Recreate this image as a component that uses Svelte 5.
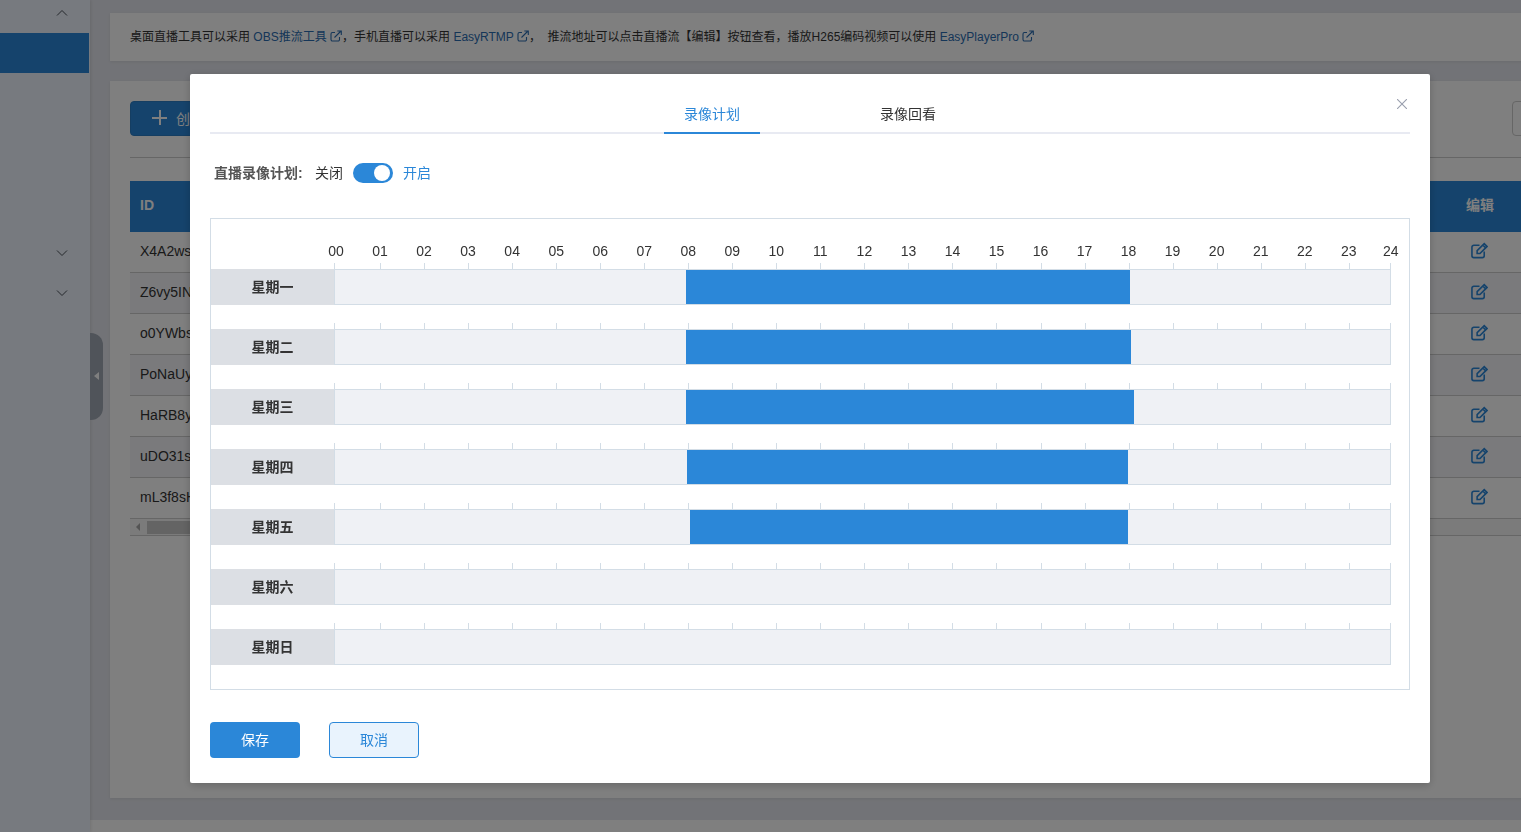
<script lang="ts">
	const hours = Array.from({ length: 25 }, (_, i) => String(i).padStart(2, '0'));
	const ids = ['X4A2wsQR', 'Z6vy5INa', 'o0YWbsTk', 'PoNaUyLe', 'HaRB8yVm', 'uDO31sGc', 'mL3f8sHp'];
	const days = [
		{ name: '星期一', from: 351, to: 795 },
		{ name: '星期二', from: 351, to: 796 },
		{ name: '星期三', from: 351, to: 799 },
		{ name: '星期四', from: 352, to: 793 },
		{ name: '星期五', from: 355, to: 793 },
		{ name: '星期六' },
		{ name: '星期日' }
	];
</script>

{#snippet ext()}
	<svg class="ext" viewBox="0 0 12 12" aria-hidden="true">
		<path d="M9.5 7v2.6a1.4 1.4 0 0 1-1.4 1.4H2.4A1.4 1.4 0 0 1 1 9.600V3.900a1.400 1.400 0 0 1 1.400-1.400H5" />
		<path d="M4.500 7.500 10.500 1.500M7.300 1h4v4" />
	</svg>
{/snippet}

<div class="page">
	<aside class="side">
		<svg class="chev up" viewBox="0 0 12 8"><path d="M1 6.500 6 1.500l5 5" /></svg>
		<div class="active"></div>
		<svg class="chev d1" viewBox="0 0 12 8"><path d="M1 1.500l5 5 5-5" /></svg>
		<svg class="chev d2" viewBox="0 0 12 8"><path d="M1 1.500l5 5 5-5" /></svg>
	</aside>
	<div class="handle"><span class="tri"></span></div>

	<main class="main">
		<div class="notice">
			桌面直播工具可以采用 <a>OBS推流工具 {@render ext()}</a>，手机直播可以采用 <a>EasyRTMP {@render ext()}</a>，&nbsp; 推流地址可以点击直播流【编辑】按钮查看，播放H265编码视频可以使用 <a>EasyPlayerPro {@render ext()}</a>
		</div>

		<section class="card">
			<div class="toolbar">
				<button class="create"><span class="plus"></span>创建直播</button>
				<button class="refresh"></button>
			</div>
			<div class="table">
				<div class="thead">
					<span class="id">ID</span>
					<span class="edit">编辑</span>
				</div>
				{#each ids as id}
					<div class="row">
						<span class="id">{id}</span>
						<span class="edit">
							<svg class="pen" viewBox="0 0 18 18" aria-hidden="true">
								<path d="M14 10v4.500a2 2 0 0 1-2 2H3a2 2 0 0 1-2-2v-9a2 2 0 0 1 2-2h6" />
								<path d="M6.500 9.200v3h3L17 4.700l-3-3zM12.500 3.200l3 3" />
							</svg>
						</span>
					</div>
				{/each}
				<div class="scrollbar">
					<span class="arrow"></span>
					<span class="thumb"></span>
				</div>
			</div>
		</section>
		<div class="footer"></div>
	</main>
</div>

<div class="overlay"></div>

<div class="modal">
	<svg class="close" viewBox="0 0 10 10"><path d="M0 0l10 10M10 0 0 10" /></svg>
	<div class="tabs">
		<span class="tab current">录像计划</span>
		<span class="tab">录像回看</span>
	</div>

	<div class="plan">
		<span class="plan-label">直播录像计划:</span>
		<span>关闭</span>
		<span class="switch"><span class="knob"></span></span>
		<span class="on">开启</span>
	</div>

	<div class="schedule">
		<div class="hours">
			{#each hours as h}
				<span>{h}</span>
			{/each}
		</div>
		{#each days as day}
			<div class="day">
				<div class="ticks">
					{#each hours as _}
						<span class="tick"></span>
					{/each}
				</div>
				<div class="line">
					<div class="name">{day.name}</div>
					<div class="track">
						{#if day.from}
							<span class="range" style="left:{day.from}px;width:{day.to - day.from}px"></span>
						{/if}
					</div>
				</div>
			</div>
		{/each}
	</div>

	<div class="actions">
		<button class="btn primary">保存</button>
		<button class="btn ghost">取消</button>
	</div>
</div>

<style>
	:global(body) {
		overflow: hidden;
		font-family: 'Liberation Sans', 'Noto Sans CJK SC', sans-serif;
		font-size: 14px;
		color: #333;
	}

	.page {
		display: flex;
		height: 832px;
		overflow: hidden;
		background: #e5e7ee;
		position: relative;
	}

	/* Sidebar */
	.side {
		flex: 0 0 90px;
		position: relative;
		background: #eef5fe;
		box-shadow: 1px 0 3px rgba(0, 0, 0, 0.1);
	}

	.active {
		position: absolute;
		top: 33px;
		left: 0;
		width: 89px;
		height: 40px;
		background: #2b87d8;
	}

	.chev {
		position: absolute;
		left: 56px;
		width: 12px;
		height: 8px;
		fill: none;
		stroke: #4a5058;
		stroke-width: 1;
	}

	.chev.up { top: 9px; }
	.chev.d1 { top: 249px; }
	.chev.d2 { top: 289px; }

	.handle {
		position: absolute;
		left: 90px;
		top: 333px;
		width: 13px;
		height: 87px;
		background: #a0a8b4;
		border-radius: 0 12px 12px 0;
		display: flex;
		align-items: center;
		justify-content: center;
	}

	.tri {
		width: 0;
		height: 0;
		border: 4px solid transparent;
		border-right: 5px solid #fff;
		border-left: 0;
		margin-top: -1px;
	}

	/* Page body behind the dialog */
	.main {
		flex: 1;
		min-width: 0;
		display: flex;
		flex-direction: column;
		padding: 13px 0 0 20px;
	}

	.notice {
		height: 48px;
		line-height: 48px;
		margin-right: -20px;
		padding-left: 20px;
		background: #fff;
		font-size: 12px;
		white-space: nowrap;
		box-shadow: 0 1px 3px rgba(0, 0, 0, 0.08);
	}

	.notice a {
		color: #2b6cb0;
	}

	.ext {
		width: 12px;
		height: 12px;
		vertical-align: -1px;
		fill: none;
		stroke: #2b6cb0;
		stroke-width: 1.1;
	}

	.card {
		margin-top: 20px;
		margin-right: -20px;
		height: 717px;
		padding: 20px;
		box-sizing: border-box;
		background: #fff;
		flex-shrink: 0;
		box-shadow: 0 1px 3px rgba(0, 0, 0, 0.08);
	}

	.toolbar {
		display: flex;
		justify-content: space-between;
		height: 56px;
		border-bottom: 1px solid #ccc;
		box-sizing: content-box;
	}

	.create {
		width: 130px;
		height: 35px;
		display: flex;
		align-items: center;
		padding: 0 0 2px 21px;
		background: #2b87d8;
		color: #fff;
		border: 1px solid #2a7cc5;
		border-radius: 4px;
		font: inherit;
	}

	.plus {
		width: 15px;
		height: 15px;
		margin-right: 9px;
		background:
			linear-gradient(#fff, #fff) center / 15px 2px no-repeat,
			linear-gradient(#fff, #fff) center / 2px 15px no-repeat;
	}

	.refresh {
		width: 60px;
		height: 35px;
		margin-right: -51px;
		background: #fff;
		border: 1px solid #ccc;
		border-radius: 4px;
	}

	.table {
		margin-top: 23px;
	}

	.thead,
	.row {
		display: flex;
		justify-content: space-between;
		align-items: center;
		padding-left: 10px;
	}

	.thead {
		height: 51px;
		box-sizing: border-box;
		padding-bottom: 4px;
		background: #2b87d8;
		color: #fff;
		font-weight: bold;
	}

	.thead .edit {
		padding-bottom: 2px;
	}

	.row {
		height: 41px;
		box-sizing: border-box;
		padding-bottom: 2px;
		border-bottom: 1px solid #ccc;
	}

	.row:nth-child(odd) {
		background: #f4f5f9;
	}

	.edit {
		flex: 0 0 82px;
		text-align: center;
		display: flex;
		justify-content: center;
		align-items: center;
	}

	.pen {
		width: 17px;
		height: 17px;
		margin: 0 2px 2px 0;
		fill: none;
		stroke: #2b87d8;
		stroke-width: 1.7;
	}

	.scrollbar {
		height: 18px;
		box-sizing: border-box;
		display: flex;
		align-items: center;
		background: #f7f7f7;
		border-bottom: 1px solid #ccc;
		margin-top: -1px;
		border-top: 1px solid #ccc;
	}

	.arrow {
		width: 0;
		height: 0;
		margin: 0 7px 0 6px;
		border: 4px solid transparent;
		border-right: 4px solid #a8a8a8;
		border-left: 0;
	}

	.thumb {
		width: 400px;
		height: 13px;
		background: #c8c8c8;
	}

	.footer {
		height: 12px;
		margin: 22px 0 0 -20px;
		background: #fff;
		flex-shrink: 0;
	}

	.overlay {
		position: fixed;
		inset: 0;
		background: rgba(0, 0, 0, 0.5);
	}

	/* Dialog */
	.modal {
		position: fixed;
		left: 190px;
		top: 74px;
		width: 1240px;
		height: 709px;
		box-sizing: border-box;
		padding: 20px 20px 0;
		background: #fff;
		border-radius: 2px;
		box-shadow: 0 2px 8px rgba(0, 0, 0, 0.2);
	}

	.close {
		position: absolute;
		right: 23px;
		top: 25px;
		width: 10px;
		height: 10px;
		fill: none;
		stroke: #9a9fae;
		stroke-width: 1.1;
	}

	.tabs {
		display: flex;
		justify-content: center;
		gap: 100px;
		height: 40px;
		box-sizing: border-box;
		border-bottom: 2px solid #e8eaf2;
	}

	.tab {
		width: 96px;
		height: 40px;
		line-height: 40px;
		box-sizing: border-box;
		text-align: center;
	}

	.tab.current {
		color: #2b87d8;
		border-bottom: 2px solid #2b87d8;
	}

	.plan {
		display: flex;
		align-items: center;
		height: 20px;
		line-height: 20px;
		margin-top: 29px;
		padding-left: 4px;
	}

	.plan span:not(.switch):not(.knob) {
		align-self: flex-start;
	}

	.plan-label {
		width: 101px;
		color: #555;
		font-weight: 600;
	}

	.switch {
		width: 40px;
		height: 20px;
		margin: 0 10px;
		position: relative;
		background: #2b87d8;
		border-radius: 10px;
	}

	.knob {
		position: absolute;
		right: 3px;
		top: 2px;
		width: 16px;
		height: 16px;
		background: #fff;
		border-radius: 50%;
	}

	.on {
		color: #2b87d8;
	}

	.schedule {
		height: 472px;
		box-sizing: border-box;
		margin-top: 35px;
		padding-top: 22px;
		border: 1px solid #d3dde6;
	}

	.hours {
		display: flex;
		height: 20px;
		line-height: 20px;
		margin: 0 0 2px 104px;
	}

	.hours span {
		flex: 0 0 44.04px;
		text-align: center;
	}

	.hours span:first-child {
		margin-left: -1px;
	}

	.hours span:last-child {
		margin-left: -2px;
	}

	.day {
		margin-bottom: 18px;
	}

	.ticks {
		display: flex;
		height: 6px;
		margin-left: 125px;
	}

	.tick {
		flex: 0 0 44.04px;
		box-sizing: border-box;
		border-left: 1px solid #d3dde6;
	}

	.tick:first-child {
		flex-basis: 46.04px;
		margin-left: -2px;
	}

	.tick:last-child {
		margin-left: -3px;
	}

	.line {
		display: flex;
		height: 36px;
	}

	.name {
		flex: 0 0 123px;
		line-height: 36px;
		text-align: center;
		font-weight: 600;
		background: #dcdfe4;
	}

	.track {
		flex: 0 0 1057px;
		position: relative;
		box-sizing: border-box;
		background: #eff1f5;
		border: 1px solid #d3dde6;
	}

	.range {
		position: absolute;
		top: 0;
		bottom: 0;
		background: #2b87d8;
	}

	.actions {
		display: flex;
		gap: 29px;
		margin-top: 32px;
	}

	.btn {
		width: 90px;
		height: 36px;
		box-sizing: border-box;
		padding: 0 0 3px;
		border-radius: 4px;
		font: inherit;
	}

	.primary {
		background: #2b87d8;
		border: 0;
		color: #fff;
	}

	.ghost {
		background: #e9f3fd;
		border: 1px solid #2b87d8;
		color: #2b87d8;
	}
</style>
